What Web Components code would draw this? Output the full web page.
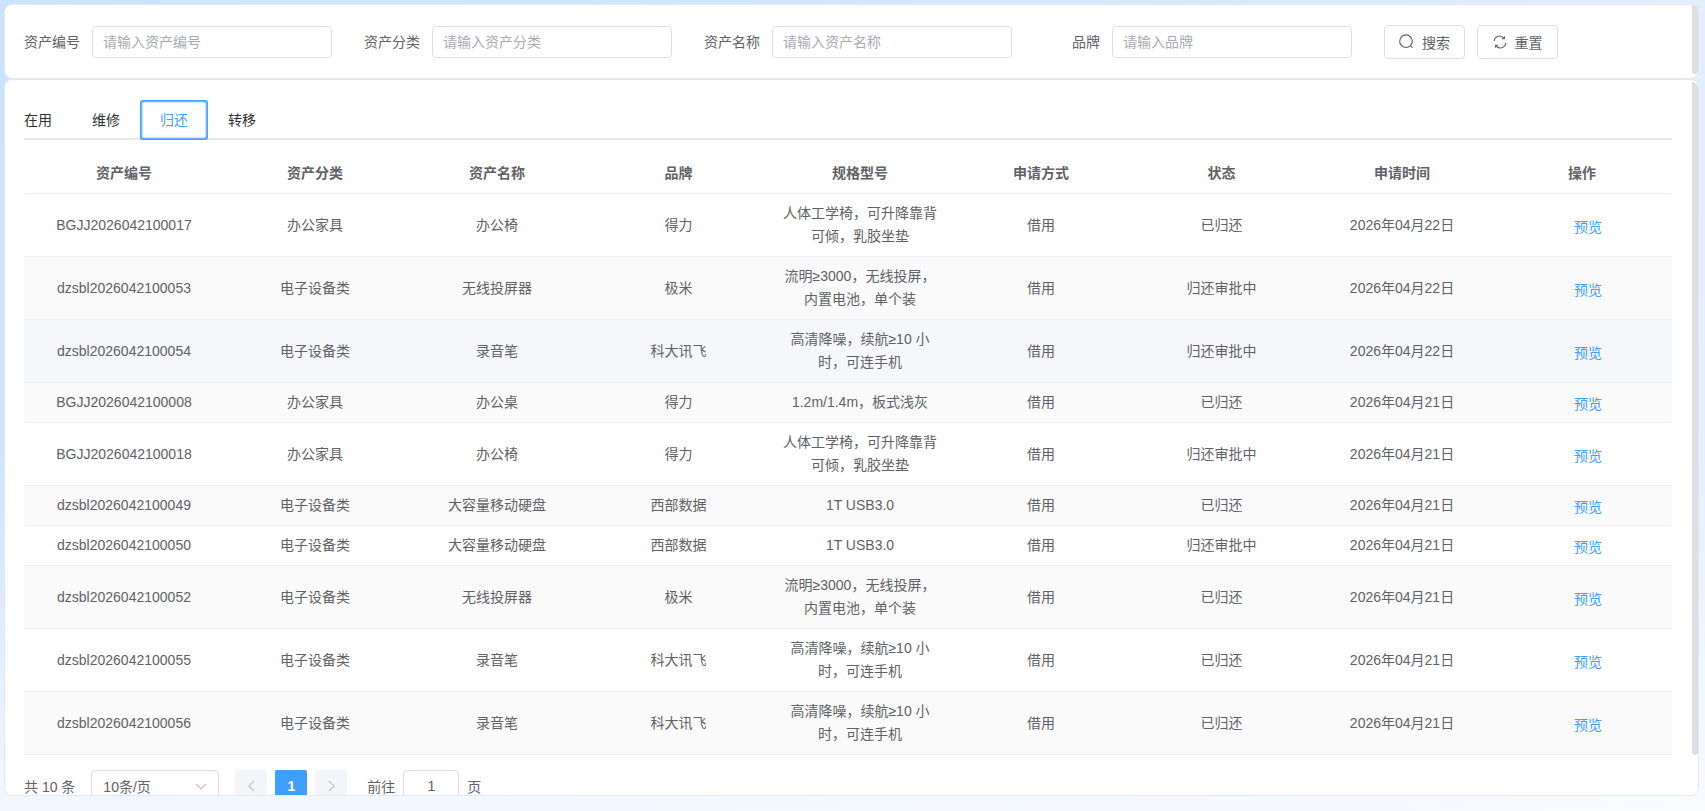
<!DOCTYPE html>
<html lang="zh-CN">
<head>
<meta charset="utf-8">
<title>资产归还</title>
<style>
    html, body { margin: 0; height: 100%; }
    body {
        font-family: "Liberation Sans", "Noto Sans CJK SC", sans-serif;
        font-size: 14px;
        color: #606266;
    }
</style>
</head>
<body>
<asset-page>
    <panel-card slot="search" kind="search">
        <filter-field label="资产编号" placeholder="请输入资产编号"></filter-field>
        <filter-field label="资产分类" placeholder="请输入资产分类"></filter-field>
        <filter-field label="资产名称" placeholder="请输入资产名称"></filter-field>
        <filter-field label="品牌" placeholder="请输入品牌"></filter-field>
        <tool-button first>
            <svg slot="icon" width="15" height="16" viewBox="0 0 15 16" fill="none" stroke="#606266" stroke-width="1.1">
                <circle cx="7" cy="7.2" r="6.3"/>
                <path d="M11.6 11.8l1.9 2.2"/>
            </svg>
            搜索
        </tool-button>
        <tool-button>
            <svg slot="icon" width="14" height="14" viewBox="0 0 14 14" fill="none" stroke="#606266" stroke-width="1.1">
                <path d="M1.2 6.2A5.4 5.4 0 0 1 11 3.4"/>
                <path d="M11.4 1.2v2.6H8.8"/>
                <path d="M12.8 7.8A5.4 5.4 0 0 1 3 10.6"/>
                <path d="M2.6 12.8v-2.6h2.6"/>
            </svg>
            重置
        </tool-button>
    </panel-card>
    <panel-card slot="main" kind="main">
        <asset-tabs>
            <tab-item>在用</tab-item>
            <tab-item>维修</tab-item>
            <tab-item active>归还</tab-item>
            <tab-item>转移</tab-item>
        </asset-tabs>
        <asset-table></asset-table>
        <page-bar></page-bar>
    </panel-card>
</asset-page>

<script>
// the outer page: gradient background, two cards and the fake scrollbars on top of them
class AssetPage extends HTMLElement {
    constructor() {
        super();
        this.attachShadow({ mode: 'open' });
        this.shadowRoot.innerHTML = `
        <style>
            :host {
                display: block;
                position: relative;
                height: 811px;
                overflow: hidden;
                box-sizing: border-box;
                padding: 4px 6px 0 4px;
                background:
                    linear-gradient(180deg, rgba(255,255,255,0) 55%, rgba(255,255,255,0.75) 100%),
                    linear-gradient(100deg, #cbe3ff 0%, #d3e7ff 50%, #e4f0ff 100%);
            }
            .thumb {
                position: absolute;
                left: 1692px;
                width: 6px;
                background: #dddee1;
                border-radius: 0 6px 3px 3px;
            }
            .one { top: 5px; height: 69px; }
            .two { top: 82px; height: 673px; }
        </style>
        <slot name="search"></slot>
        <slot name="main"></slot>
        <div class="thumb one"></div>
        <div class="thumb two"></div>
        `;
    }
}

class PanelCard extends HTMLElement {
    constructor() {
        super();
        this.attachShadow({ mode: 'open' });
        this.shadowRoot.innerHTML = `
        <style>
            :host {
                display: block;
                box-sizing: border-box;
                background: #fff;
                border: 1px solid #e6e8ee;
                border-radius: 8px;
                overflow: hidden;
            }
            :host([kind="search"]) {
                height: 75px;
                padding: 0 19px;
                display: flex;
                align-items: center;
                gap: 32px;
            }
            :host([kind="main"]) {
                height: 717px;
                padding: 20px 26px 0 19px;
            }
        </style>
        <slot></slot>
        `;
    }
}

class FilterField extends HTMLElement {
    constructor() {
        super();
        this.attachShadow({ mode: 'open' });
        this.shadowRoot.innerHTML = `
        <style>
            :host { display: flex; align-items: center; gap: 12px; margin-top: 1px; }
            label { width: 56px; text-align: right; line-height: 32px; }
            input {
                box-sizing: border-box;
                width: 240px;
                height: 32px;
                padding: 0 10px;
                border: 1px solid #dcdfe6;
                border-radius: 4px;
                outline: none;
                font: inherit;
                color: #606266;
            }
            input::placeholder { color: #a8abb2; opacity: 1; }
        </style>
        <label></label>
        <input type="text">
        `;
    }

    connectedCallback() {
        this.shadowRoot.querySelector('label').textContent = this.getAttribute('label');
        this.shadowRoot.querySelector('input').placeholder = this.getAttribute('placeholder');
    }
}

class ToolButton extends HTMLElement {
    constructor() {
        super();
        this.attachShadow({ mode: 'open' });
        this.shadowRoot.innerHTML = `
        <style>
            :host {
                display: flex;
                align-items: center;
                justify-content: center;
                gap: 8px;
                box-sizing: border-box;
                width: 81px;
                height: 34px;
                margin-top: 1px;
                border: 1px solid #dcdfe6;
                border-radius: 4px;
                color: #606266;
                cursor: pointer;
            }
            /* the second button sits closer than the form gap */
            :host(:not([first])) { margin-left: -20px; }
            ::slotted(svg) { display: block; }
        </style>
        <slot name="icon"></slot>
        <slot></slot>
        `;
    }
}

class AssetTabs extends HTMLElement {
    constructor() {
        super();
        this.attachShadow({ mode: 'open' });
        this.shadowRoot.innerHTML = `
        <style>
            :host { display: flex; position: relative; height: 40px; }
            :host::after {
                content: '';
                position: absolute;
                left: 0;
                right: 0;
                bottom: 0;
                height: 2px;
                background: #e4e7ed;
            }
            ::slotted(tab-item:first-child) { padding-left: 0; }
        </style>
        <slot></slot>
        `;
        this.addEventListener('click', (event) => {
            const tab = event.target.closest('tab-item');
            if (!tab) return;
            this.querySelectorAll('tab-item').forEach((t) => t.removeAttribute('active'));
            tab.setAttribute('active', '');
        });
    }
}

class TabItem extends HTMLElement {
    constructor() {
        super();
        this.attachShadow({ mode: 'open' });
        this.shadowRoot.innerHTML = `
        <style>
            :host {
                display: block;
                position: relative;
                z-index: 1;
                padding: 0 20px;
                line-height: 40px;
                color: #303133;
                cursor: pointer;
            }
            :host([active]) {
                color: #409eff;
                border-radius: 3px;
                box-shadow: 0 0 2px 2px #409eff inset;
            }
        </style>
        <slot></slot>
        `;
    }
}

const COLUMNS = ['资产编号', '资产分类', '资产名称', '品牌', '规格型号', '申请方式', '状态', '申请时间', '操作'];

const CHAIR = '人体工学椅，可升降靠背可倾，乳胶坐垫';
const PROJECTOR = '流明≥3000，无线投屏，内置电池，单个装';
const PEN = '高清降噪，续航≥10 小时，可连手机';

// code, type, name, brand, spec, status, date, row background
const ROWS = [
    ['BGJJ2026042100017', '办公家具', '办公椅', '得力', CHAIR, '已归还', '2026年04月22日', ''],
    ['dzsbl2026042100053', '电子设备类', '无线投屏器', '极米', PROJECTOR, '归还审批中', '2026年04月22日', 'stripe'],
    ['dzsbl2026042100054', '电子设备类', '录音笔', '科大讯飞', PEN, '归还审批中', '2026年04月22日', 'hover'],
    ['BGJJ2026042100008', '办公家具', '办公桌', '得力', '1.2m/1.4m，板式浅灰', '已归还', '2026年04月21日', 'stripe'],
    ['BGJJ2026042100018', '办公家具', '办公椅', '得力', CHAIR, '归还审批中', '2026年04月21日', ''],
    ['dzsbl2026042100049', '电子设备类', '大容量移动硬盘', '西部数据', '1T USB3.0', '已归还', '2026年04月21日', 'stripe'],
    ['dzsbl2026042100050', '电子设备类', '大容量移动硬盘', '西部数据', '1T USB3.0', '归还审批中', '2026年04月21日', ''],
    ['dzsbl2026042100052', '电子设备类', '无线投屏器', '极米', PROJECTOR, '已归还', '2026年04月21日', 'stripe'],
    ['dzsbl2026042100055', '电子设备类', '录音笔', '科大讯飞', PEN, '已归还', '2026年04月21日', ''],
    ['dzsbl2026042100056', '电子设备类', '录音笔', '科大讯飞', PEN, '已归还', '2026年04月21日', 'stripe'],
];

class AssetTable extends HTMLElement {
    constructor() {
        super();
        this.attachShadow({ mode: 'open' });
        const cell = (text) => `<div class="cell">${text}</div>`;
        const head = COLUMNS.map((c) => `<div class="cell">${c}</div>`).join('');
        const body = ROWS.map((r) => `
            <div class="row ${r[7]}">
                ${cell(r[0])}${cell(r[1])}${cell(r[2])}${cell(r[3])}${cell(r[4])}
                ${cell('借用')}${cell(r[5])}${cell(r[6])}
                <div class="cell"><a>预览</a></div>
            </div>`).join('');
        this.shadowRoot.innerHTML = `
        <style>
            :host { display: block; line-height: 23px; color: #606266; }
            .row {
                display: grid;
                grid-template-columns: 200px 182px 182px 181px 182px 180px 181px 180px 180px;
                border-bottom: 1px solid #ebeef5;
            }
            .cell {
                display: flex;
                align-items: center;
                justify-content: center;
                box-sizing: border-box;
                padding: 8px 10px;
                text-align: center;
            }
            .head { font-weight: 700; }
            .head .cell { padding: 22px 10px 8px; }
            .stripe { background: #fafafa; }
            .hover { background: #f5f7fa; }
            a {
                margin: 4px 0 0 12px;
                line-height: 19px;
                color: #409eff;
                cursor: pointer;
            }
        </style>
        <div class="row head">${head}</div>
        ${body}
        `;
    }
}

class PageBar extends HTMLElement {
    constructor() {
        super();
        this.attachShadow({ mode: 'open' });
        this.shadowRoot.innerHTML = `
        <style>
            :host {
                display: flex;
                align-items: center;
                height: 32px;
                margin-top: 15px;
                color: #606266;
            }
            .select, .jump {
                box-sizing: border-box;
                height: 32px;
                border: 1px solid #dcdfe6;
                border-radius: 4px;
                display: flex;
                align-items: center;
            }
            .select {
                width: 128px;
                margin-left: 16px;
                padding: 0 11px 0 11px;
                justify-content: space-between;
            }
            .pager { display: flex; gap: 8px; margin: 0 20px 0 16px; }
            .pager div {
                width: 32px;
                height: 32px;
                border-radius: 2px;
                background: #f4f5f8;
                display: flex;
                align-items: center;
                justify-content: center;
            }
            .pager .on { background: #409eff; color: #fff; font-weight: 700; }
            .jump { width: 56px; margin: 0 8px; justify-content: center; }
        </style>
        <span>共 10 条</span>
        <div class="select">
            <span>10条/页</span>
            <svg width="12" height="7" viewBox="0 0 12 7" fill="none" stroke="#c0c4cc" stroke-width="1.2"><path d="M1 1l5 5 5-5"/></svg>
        </div>
        <div class="pager">
            <div><svg width="7" height="12" viewBox="0 0 7 12" fill="none" stroke="#c0c4cc" stroke-width="1.2"><path d="M6 1L1 6l5 5"/></svg></div>
            <div class="on">1</div>
            <div><svg width="7" height="12" viewBox="0 0 7 12" fill="none" stroke="#c0c4cc" stroke-width="1.2"><path d="M1 1l5 5-5 5"/></svg></div>
        </div>
        <span>前往</span>
        <div class="jump">1</div>
        <span>页</span>
        `;
    }
}

customElements.define('asset-page', AssetPage);
customElements.define('panel-card', PanelCard);
customElements.define('filter-field', FilterField);
customElements.define('tool-button', ToolButton);
customElements.define('asset-tabs', AssetTabs);
customElements.define('tab-item', TabItem);
customElements.define('asset-table', AssetTable);
customElements.define('page-bar', PageBar);
</script>
</body>
</html>
